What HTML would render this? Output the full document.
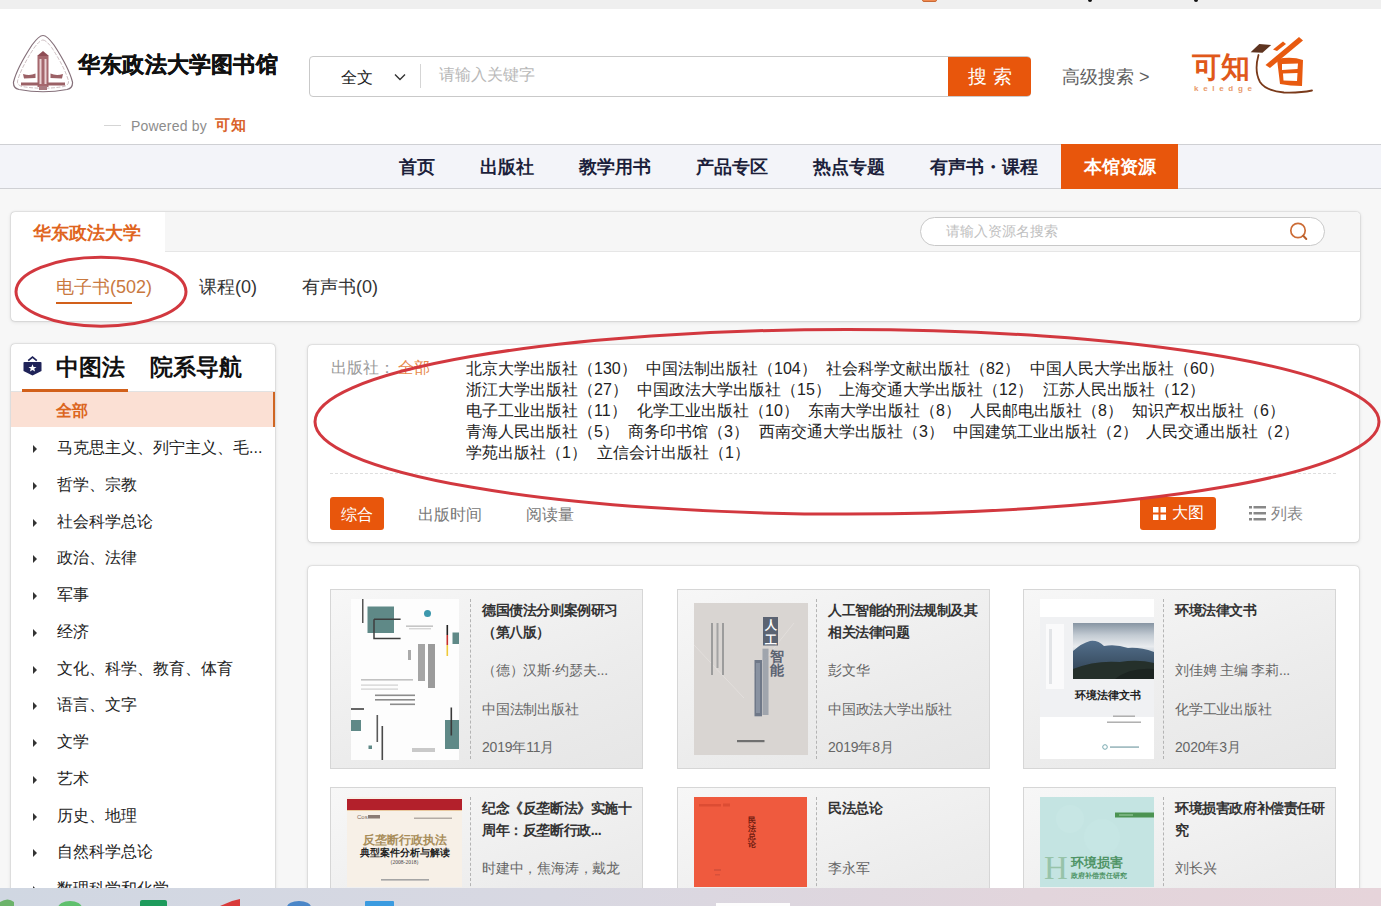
<!DOCTYPE html>
<html><head><meta charset="utf-8">
<style>
*{margin:0;padding:0;box-sizing:border-box}
html,body{width:1381px;height:906px;overflow:hidden;background:#f7f7f7;font-family:"Liberation Sans",sans-serif;color:#333}
.abs{position:absolute}
#topstrip{left:0;top:0;width:1381px;height:9px;background:#efefef}
#header{left:0;top:9px;width:1381px;height:135px;background:#fff}
#nav{left:0;top:144px;width:1381px;height:45px;background:#f3f4f9;border-top:1px solid #cfd0d4;border-bottom:1px solid #cfd0d4}
.navi{position:absolute;top:12px;font-size:18px;font-weight:bold;color:#1c1f3b;line-height:20px;white-space:nowrap}
.panel{position:absolute;background:#fff;border-radius:4px;box-shadow:0 0 1.5px rgba(0,0,0,.35),0 1px 4px rgba(0,0,0,.1)}
.t{position:absolute;white-space:nowrap;line-height:1}
.pub{font-size:16px;color:#222}
.card{position:absolute;width:313px;height:180px;border:1px solid #d6d6d6;background:linear-gradient(160deg,#f7f7f7 0%,#ececec 60%,#e6e6e6 100%)}
.ttl{font-size:14px;letter-spacing:-0.4px;font-weight:bold;color:#333}
.inf{font-size:14px;letter-spacing:-0.2px;color:#666}
.tri{position:absolute;left:22px;width:0;height:0;border-top:4px solid transparent;border-bottom:4px solid transparent;border-left:4px solid #333}
</style></head><body>
<div id="topstrip" class="abs"></div>
<div class="abs" style="left:922px;top:-4px;width:15px;height:6px;border-radius:2px;background:#f08a50;border:1px solid #c96a36"></div>
<div class="abs" style="left:1088px;top:-2px;width:4px;height:4px;border-radius:2px;background:#111"></div>
<div class="abs" style="left:1194px;top:-2px;width:4px;height:4px;border-radius:2px;background:#111"></div>
<div id="header" class="abs"></div>
<!-- emblem -->
<svg class="abs" style="left:10px;top:32px" width="66" height="62" viewBox="0 0 66 62">
  <path d="M33 3.5 Q37 3.5 44 13 Q59 36 62.5 50 Q63 56 57 57.5 Q33 62 9 57.5 Q3 56 3.5 50 Q7 36 22 13 Q29 3.5 33 3.5Z" fill="#fff" stroke="#85707a" stroke-width="1.2"/>
  <path d="M33 8 Q36 8 42 16 Q55 36 58.5 49 Q59 53 54 54.5 Q33 58 12 54.5 Q7 53 7.5 49 Q11 36 24 16 Q30 8 33 8Z" fill="none" stroke="#b8a4a8" stroke-width="0.7" stroke-dasharray="4 1.5"/>
  <path d="M33 19 L39 24 L27 24Z" fill="#8f4d55"/>
  <rect x="27.5" y="24" width="11" height="31" fill="#a5676d"/>
  <rect x="29.5" y="27" width="2" height="25" fill="#e9d2d4"/>
  <rect x="34.5" y="27" width="2" height="25" fill="#e9d2d4"/>
  <path d="M13 42 Q20 44 25.5 41.5 L25.5 46 L14 46.5Z M40.5 41.5 Q46 44 53 42 L52 46.5 L40.5 46Z" fill="#9b6166"/>
  <rect x="11" y="50.5" width="18" height="3" fill="#9b6166"/><rect x="37" y="50.5" width="18" height="3" fill="#9b6166"/>
  <rect x="29" y="54" width="8" height="4" fill="#a97a80"/>
</svg>
<div class="t" style="left:78px;top:54px;font-size:22px;font-weight:bold;color:#111;letter-spacing:0.2px;-webkit-text-stroke:0.35px #111">华东政法大学图书馆</div>
<div class="abs" style="left:104px;top:125px;width:17px;height:1px;background:#d5d5d5"></div>
<div class="t" style="left:131px;top:119px;font-size:14px;color:#8c8c8c;letter-spacing:0.2px">Powered by</div>
<div class="t" style="left:215px;top:117px;font-size:15px;font-weight:bold;color:#d9622a;letter-spacing:1px">可知</div>
<!-- search -->
<div class="abs" style="left:309px;top:56px;width:722px;height:41px;border:1px solid #c9c9c9;border-radius:4px;background:#fff"></div>
<div class="t" style="left:341px;top:69.5px;font-size:16px;color:#222">全文</div>
<svg class="abs" style="left:393px;top:72px" width="14" height="10" viewBox="0 0 14 10"><path d="M2 2.5 L7 7.5 L12 2.5" fill="none" stroke="#333" stroke-width="1.4"/></svg>
<div class="abs" style="left:420px;top:64px;width:1px;height:24px;background:#d5d5d5"></div>
<div class="t" style="left:439px;top:67px;font-size:16px;color:#b8b8b8">请输入关键字</div>
<div class="abs" style="left:948px;top:57px;width:83px;height:39px;background:#e8560c;border-radius:0 4px 4px 0"></div>
<div class="t" style="left:968px;top:66.5px;font-size:19px;color:#fff;letter-spacing:6px">搜索</div>
<div class="t" style="left:1062px;top:68px;font-size:18px;color:#5e5e5e">高级搜索 &gt;</div>
<!-- keledge logo -->
<div class="t" style="left:1192px;top:53px;font-size:29px;font-weight:bold;color:#e0581a;letter-spacing:0px">可知</div>
<div class="t" style="left:1194px;top:85px;font-size:8px;color:#e8996a;letter-spacing:4.7px;font-weight:bold">keledge</div>
<svg class="abs" style="left:1248px;top:35px" width="66" height="62" viewBox="0 0 66 62">
  <path d="M2.6 17.2 L11.3 9 L23.2 10.1 L14.5 17.7Z" fill="#5e3420"/>
  <path d="M10.5 20 Q6 36 12 47 Q18 56 36 57.5 Q52 58 64 55.5" fill="none" stroke="#7a3a1a" stroke-width="1.8" stroke-linecap="round"/>
  <path d="M25 14.5 L35 6.5 L38 9 L29 16Z" fill="#e85a10"/>
  <path d="M51 2 L55 5.5 L22 33 L17.5 30Z" fill="#e85a10"/>
  <path d="M29 24 Q44 21 55 25 L54 51 Q42 51 32 49Z M34 29 L50 28.5 L49.5 34 L34 35Z M35 38.5 L49.5 38 L49 46 L35.5 45.5Z" fill="#e85a10" fill-rule="evenodd"/>
</svg>
<div id="nav" class="abs">
  <div class="navi" style="left:399px">首页</div>
  <div class="navi" style="left:480px">出版社</div>
  <div class="navi" style="left:579px">教学用书</div>
  <div class="navi" style="left:696px">产品专区</div>
  <div class="navi" style="left:813px">热点专题</div>
  <div class="navi" style="left:930px">有声书・课程</div>
  <div style="position:absolute;left:1061px;top:-1px;width:117px;height:45px;background:#e8560c"></div>
  <div class="navi" style="left:1084px;color:#fff">本馆资源</div>
</div>

<!-- panel 1 -->
<div class="panel" style="left:11px;top:212px;width:1349px;height:109px;overflow:hidden">
  <div class="abs" style="left:154px;top:0;width:1196px;height:40px;background:#f6f6f6;border-bottom:1px solid #e6e6e6"></div>
  <div class="t" style="left:22px;top:12px;font-size:18px;font-weight:bold;color:#e0651e">华东政法大学</div>
  <div class="abs" style="left:909px;top:5px;width:405px;height:29px;border:1px solid #c8c8c8;border-radius:15px;background:#fff"></div>
  <div class="t" style="left:935px;top:12.5px;font-size:13.5px;color:#c0c0c0">请输入资源名搜索</div>
  <svg class="abs" style="left:1277px;top:9px" width="22" height="22" viewBox="0 0 22 22"><circle cx="10" cy="9.5" r="7.2" fill="none" stroke="#cc6c36" stroke-width="1.7"/><path d="M15.2 14.8 L18.3 18" stroke="#b8602e" stroke-width="2" stroke-linecap="round"/></svg>
  <div class="t" style="left:45px;top:66px;font-size:18px;color:#c9793f">电子书(502)</div>
  <div class="abs" style="left:45px;top:90px;width:76px;height:2px;background:#d2601a"></div>
  <div class="t" style="left:188px;top:66px;font-size:18px;color:#333">课程(0)</div>
  <div class="t" style="left:291px;top:66px;font-size:18px;color:#333">有声书(0)</div>
</div>

<!-- sidebar -->
<div class="panel" style="left:11px;top:344px;width:264px;height:600px;overflow:hidden">
  <svg class="abs" style="left:12px;top:12px" width="20" height="20" viewBox="0 0 20 20"><path d="M5.2 4.6 L9.5 1.2 L13.8 4.6" fill="none" stroke="#1f2358" stroke-width="1.7"/><path d="M0.5 6.8 Q0.5 6 1.5 6 L17.5 6 Q18.5 6 18.5 6.8 L18.5 15 L9.5 19.5 L0.5 15Z" fill="#1f2358"/><path d="M9.5 8.2 L10.6 11 L13.5 11 L11.2 12.8 L12.1 15.6 L9.5 13.9 L6.9 15.6 L7.8 12.8 L5.5 11 L8.4 11Z" fill="#fff"/></svg>
  <div class="t" style="left:45px;top:12px;font-size:23px;font-weight:bold;color:#111">中图法</div>
  <div class="t" style="left:139px;top:12px;font-size:23px;font-weight:bold;color:#111">院系导航</div>
  <div class="abs" style="left:0;top:47px;width:264px;height:1px;background:#e2e2e2"></div>
  <div class="abs" style="left:11px;top:45px;width:106px;height:3px;background:#d2601a"></div>
  <div class="abs" style="left:0;top:48px;width:264px;height:35px;background:#fbe0d4;border-right:2px solid #cf6522"></div>
  <div class="t" style="left:45px;top:59px;font-size:16px;font-weight:bold;color:#dc661e">全部</div>
  <div class="tri" style="top:101.0px"></div>
  <div class="t" style="left:46px;top:96.0px;font-size:16px;color:#222">马克思主义、列宁主义、毛...</div>
  <div class="tri" style="top:137.8px"></div>
  <div class="t" style="left:46px;top:132.8px;font-size:16px;color:#222">哲学、宗教</div>
  <div class="tri" style="top:174.5px"></div>
  <div class="t" style="left:46px;top:169.5px;font-size:16px;color:#222">社会科学总论</div>
  <div class="tri" style="top:211.2px"></div>
  <div class="t" style="left:46px;top:206.2px;font-size:16px;color:#222">政治、法律</div>
  <div class="tri" style="top:248.0px"></div>
  <div class="t" style="left:46px;top:243.0px;font-size:16px;color:#222">军事</div>
  <div class="tri" style="top:284.8px"></div>
  <div class="t" style="left:46px;top:279.8px;font-size:16px;color:#222">经济</div>
  <div class="tri" style="top:321.5px"></div>
  <div class="t" style="left:46px;top:316.5px;font-size:16px;color:#222">文化、科学、教育、体育</div>
  <div class="tri" style="top:358.2px"></div>
  <div class="t" style="left:46px;top:353.2px;font-size:16px;color:#222">语言、文字</div>
  <div class="tri" style="top:395.0px"></div>
  <div class="t" style="left:46px;top:390.0px;font-size:16px;color:#222">文学</div>
  <div class="tri" style="top:431.8px"></div>
  <div class="t" style="left:46px;top:426.8px;font-size:16px;color:#222">艺术</div>
  <div class="tri" style="top:468.5px"></div>
  <div class="t" style="left:46px;top:463.5px;font-size:16px;color:#222">历史、地理</div>
  <div class="tri" style="top:505.2px"></div>
  <div class="t" style="left:46px;top:500.2px;font-size:16px;color:#222">自然科学总论</div>
  <div class="tri" style="top:542.0px"></div>
  <div class="t" style="left:46px;top:537.0px;font-size:16px;color:#222">数理科学和化学</div>
</div>

<!-- publisher filter -->
<div class="panel" style="left:308px;top:345px;width:1051px;height:197px">
  <div class="t" style="left:23px;top:15px;font-size:16px;color:#999">出版社：</div>
  <div class="t" style="left:90px;top:15px;font-size:16px;color:#e8894a">全部</div>
  <div class="t pub" style="left:158px;top:16px">北京大学出版社（130）</div>
  <div class="t pub" style="left:338px;top:16px">中国法制出版社（104）</div>
  <div class="t pub" style="left:518px;top:16px">社会科学文献出版社（82）</div>
  <div class="t pub" style="left:722px;top:16px">中国人民大学出版社（60）</div>
  <div class="t pub" style="left:158px;top:37px">浙江大学出版社（27）</div>
  <div class="t pub" style="left:329px;top:37px">中国政法大学出版社（15）</div>
  <div class="t pub" style="left:531px;top:37px">上海交通大学出版社（12）</div>
  <div class="t pub" style="left:735px;top:37px">江苏人民出版社（12）</div>
  <div class="t pub" style="left:158px;top:58px">电子工业出版社（11）</div>
  <div class="t pub" style="left:329px;top:58px">化学工业出版社（10）</div>
  <div class="t pub" style="left:500px;top:58px">东南大学出版社（8）</div>
  <div class="t pub" style="left:662px;top:58px">人民邮电出版社（8）</div>
  <div class="t pub" style="left:824px;top:58px">知识产权出版社（6）</div>
  <div class="t pub" style="left:158px;top:79px">青海人民出版社（5）</div>
  <div class="t pub" style="left:320px;top:79px">商务印书馆（3）</div>
  <div class="t pub" style="left:451px;top:79px">西南交通大学出版社（3）</div>
  <div class="t pub" style="left:645px;top:79px">中国建筑工业出版社（2）</div>
  <div class="t pub" style="left:838px;top:79px">人民交通出版社（2）</div>
  <div class="t pub" style="left:158px;top:100px">学苑出版社（1）</div>
  <div class="t pub" style="left:289px;top:100px">立信会计出版社（1）</div>
  <div class="abs" style="left:22px;top:128px;width:1006px;height:0;border-top:1px dashed #dedede"></div>
  <div class="abs" style="left:22px;top:152px;width:54px;height:33px;background:#e8560c;border-radius:3px"></div>
  <div class="t" style="left:33px;top:162px;font-size:16px;color:#fff">综合</div>
  <div class="t" style="left:110px;top:162px;font-size:16px;color:#777">出版时间</div>
  <div class="t" style="left:218px;top:162px;font-size:16px;color:#777">阅读量</div>
  <div class="abs" style="left:832px;top:152px;width:76px;height:33px;background:#e8560c;border-radius:3px"></div>
  <svg class="abs" style="left:845px;top:162px" width="13" height="13" viewBox="0 0 13 13"><rect x="0" y="0" width="5.5" height="5.5" fill="#fff"/><rect x="7.5" y="0" width="5.5" height="5.5" fill="#fff"/><rect x="0" y="7.5" width="5.5" height="5.5" fill="#fff"/><rect x="7.5" y="7.5" width="5.5" height="5.5" fill="#fff"/></svg>
  <div class="t" style="left:864px;top:160px;font-size:16px;color:#fff">大图</div>
  <svg class="abs" style="left:941px;top:161px" width="17" height="15" viewBox="0 0 17 15"><rect x="0" y="0" width="3" height="2.5" fill="#888"/><rect x="4.5" y="0" width="12.5" height="2.5" fill="#888"/><rect x="0" y="6" width="3" height="2.5" fill="#888"/><rect x="4.5" y="6" width="12.5" height="2.5" fill="#888"/><rect x="0" y="12" width="3" height="2.5" fill="#888"/><rect x="4.5" y="12" width="12.5" height="2.5" fill="#888"/></svg>
  <div class="t" style="left:963px;top:160.5px;font-size:16px;color:#858585">列表</div>
</div>

<!-- books panel -->
<div class="panel" style="left:308px;top:566px;width:1051px;height:400px;overflow:hidden">
  <div class="card" style="left:22px;top:23px"></div>
  <div class="abs" style="left:43px;top:33px;line-height:0"><svg width="108" height="161" viewBox="0 0 108 161"><rect width="108" height="161" fill="#fdfdfd"/><rect x="11" y="0" width="1.5" height="24" fill="#555"/><rect x="16.5" y="7.5" width="26.5" height="26.5" fill="#5f8987"/><path d="M23 20.3 H49.6 M23 20.3 V39.5 H49.6" fill="none" stroke="#3e3e3e" stroke-width="1.5"/><circle cx="76.5" cy="14.5" r="3.5" fill="#3d98ad"/><rect x="55" y="26.5" width="27" height="1.3" fill="#b9b9b9"/><rect x="58" y="29.3" width="22" height="1" fill="#c5c5c5"/><rect x="95.5" y="26" width="1.6" height="10" fill="#222"/><rect x="95.5" y="36" width="1.6" height="10" fill="#c8302e"/><rect x="95.5" y="46" width="1.6" height="11" fill="#efc93a"/><rect x="101.5" y="33.5" width="6.5" height="11.5" fill="#5f8987"/><rect x="77" y="45" width="7" height="44" fill="#8a8a8a" opacity="0.85"/><rect x="67" y="45" width="7" height="37" fill="#8f8f8f" opacity="0.8"/><rect x="57" y="51" width="3" height="10" fill="#aaa"/><rect x="10" y="80" width="52" height="1.6" fill="#c2c2c2"/><rect x="10" y="85.5" width="37" height="1.2" fill="#cfcfcf"/><rect x="10" y="89.5" width="37" height="1.2" fill="#cfcfcf"/><rect x="24" y="95.5" width="40" height="1.6" fill="#8c8c8c"/><rect x="24" y="100" width="40" height="1.6" fill="#8c8c8c"/><rect x="39" y="104.5" width="25" height="1.6" fill="#8c8c8c"/><rect x="0" y="109" width="13" height="2" fill="#666"/><rect x="0" y="121" width="10" height="11" fill="#5f8987"/><rect x="25.5" y="116" width="1.6" height="27" fill="#5a5a5a"/><rect x="30.5" y="127" width="1.6" height="34" fill="#4a4a4a"/><rect x="17.5" y="146.5" width="3.5" height="3.5" fill="#5f8987"/><rect x="94" y="121" width="14" height="29" fill="#5f8987"/><rect x="99.5" y="108.5" width="1.6" height="28" fill="#3a3a3a"/><rect x="61" y="149" width="23" height="4" fill="#c9c9c9"/></svg></div>
  <div class="abs" style="left:162px;top:33px;width:0;height:160px;border-left:1px dashed #b4b4b4"></div>
  <div class="t ttl" style="left:174px;top:37px">德国债法分则案例研习</div>
  <div class="t ttl" style="left:174px;top:59px">（第八版）</div>
  <div class="t inf" style="left:174px;top:97px">（德）汉斯·约瑟夫...</div>
  <div class="t inf" style="left:174px;top:136px">中国法制出版社</div>
  <div class="t inf" style="left:174px;top:174px">2019年11月</div>
  <div class="card" style="left:369px;top:23px"></div>
  <div class="abs" style="left:386px;top:37px;line-height:0"><svg width="114" height="152" viewBox="0 0 114 152"><rect width="114" height="152" fill="#d9d5d2"/><path d="M0 42 L50 95 M60 70 L100 20" fill="none" stroke="#e4e1de" stroke-width="0.8"/><rect x="69" y="14" width="15" height="28.5" fill="#5b6372"/><text x="76.5" y="26" font-size="12" fill="#fff" text-anchor="middle" font-weight="bold">人</text><text x="76.5" y="40.5" font-size="12" fill="#fff" text-anchor="middle" font-weight="bold">工</text><text x="82.5" y="57.5" font-size="13.5" fill="#5b6372" text-anchor="middle" font-weight="bold">智</text><text x="82.5" y="72" font-size="13.5" fill="#5b6372" text-anchor="middle" font-weight="bold">能</text><rect x="60.5" y="57" width="7.5" height="56.3" fill="#6f7888"/><rect x="62" y="60" width="4" height="50" fill="#8992a1"/><rect x="68.5" y="45.7" width="6" height="66.3" fill="#8c94a0" opacity="0.75"/><rect x="17" y="20" width="2" height="52" fill="#9c9c9c"/><rect x="22.5" y="20" width="2" height="45" fill="#a3a3a3"/><rect x="28" y="20" width="2" height="52" fill="#9c9c9c"/><rect x="43" y="137" width="27.5" height="2.2" fill="#707070"/></svg></div>
  <div class="abs" style="left:508px;top:33px;width:0;height:160px;border-left:1px dashed #b4b4b4"></div>
  <div class="t ttl" style="left:520px;top:37px">人工智能的刑法规制及其</div>
  <div class="t ttl" style="left:520px;top:59px">相关法律问题</div>
  <div class="t inf" style="left:520px;top:97px">彭文华</div>
  <div class="t inf" style="left:520px;top:136px">中国政法大学出版社</div>
  <div class="t inf" style="left:520px;top:174px">2019年8月</div>
  <div class="card" style="left:715px;top:23px"></div>
  <div class="abs" style="left:732px;top:33px;line-height:0"><svg width="114" height="160" viewBox="0 0 114 160"><defs><linearGradient id="sky" x1="0" y1="0" x2="0" y2="1"><stop offset="0" stop-color="#8795a3"/><stop offset="0.22" stop-color="#c3cbd3"/><stop offset="0.42" stop-color="#e8ebee"/><stop offset="0.6" stop-color="#b5c2cf"/><stop offset="1" stop-color="#8fa2b5"/></linearGradient><linearGradient id="mt" x1="0" y1="0" x2="0" y2="1"><stop offset="0" stop-color="#536f8c"/><stop offset="1" stop-color="#2c3d4c"/></linearGradient></defs><rect width="114" height="160" fill="#fff"/><rect x="0" y="18" width="114" height="100" fill="#f0f1f3"/><rect x="6" y="25" width="18" height="65" fill="#fafafb"/><rect x="9" y="30" width="3" height="55" fill="#e2e4e7"/><rect x="33" y="24" width="81" height="56" fill="url(#sky)"/><path d="M33 52 Q42 44 50 42 Q58 41 64 47 Q76 45 88 49 Q100 48 114 53 L114 80 L33 80Z" fill="url(#mt)"/><path d="M33 70 Q55 61 80 63 Q98 60 114 64 L114 80 L33 80Z" fill="#25302b"/><path d="M75 80 Q90 68 114 70 L114 80Z" fill="#1c2421"/><text x="67.5" y="100" font-size="11" font-family="Liberation Serif, serif" font-weight="bold" fill="#222" text-anchor="middle" letter-spacing="0">环境法律文书</text><rect x="73" y="116.5" width="22" height="1.4" fill="#a9a9a9"/><rect x="67" y="122.5" width="34" height="1.4" fill="#a9a9a9"/><circle cx="65" cy="148" r="2.3" fill="none" stroke="#6aa0a8" stroke-width="0.9"/><rect x="70" y="147.3" width="29" height="1.6" fill="#9bb7bd"/></svg></div>
  <div class="abs" style="left:855px;top:33px;width:0;height:160px;border-left:1px dashed #b4b4b4"></div>
  <div class="t ttl" style="left:867px;top:37px">环境法律文书</div>
  <div class="t inf" style="left:867px;top:97px">刘佳娉 主编 李莉...</div>
  <div class="t inf" style="left:867px;top:136px">化学工业出版社</div>
  <div class="t inf" style="left:867px;top:174px">2020年3月</div>
  <div class="card" style="left:22px;top:221px"></div>
  <div class="abs" style="left:39px;top:231px;line-height:0"><svg width="115" height="90" viewBox="0 0 115 90"><rect width="115" height="90" fill="#f7f0e7"/><rect x="0" y="2" width="115" height="11" fill="#b3202b"/><rect x="0" y="13" width="115" height="1" fill="#e9c9a0"/><text x="10" y="22" font-size="6" font-family="Liberation Sans" fill="#7d6a60">Cos</text><rect x="21" y="18" width="12" height="3.5" fill="#8a7b74"/><rect x="67" y="20.5" width="38" height="1.5" fill="#b4aca6"/><text x="57.5" y="46.5" font-size="12" font-family="Liberation Serif, serif" font-weight="bold" fill="#a88d5a" text-anchor="middle">反垄断行政执法</text><text x="57.5" y="59" font-size="9.6" font-family="Liberation Serif, serif" font-weight="bold" fill="#222" text-anchor="middle">典型案件分析与解读</text><text x="57.5" y="67" font-size="5.5" font-family="Liberation Serif, serif" fill="#444" text-anchor="middle">（2008-2018）</text><rect x="34" y="82" width="48" height="1.6" fill="#a5a5a5"/></svg></div>
  <div class="abs" style="left:162px;top:231px;width:0;height:160px;border-left:1px dashed #b4b4b4"></div>
  <div class="t ttl" style="left:174px;top:235px">纪念《反垄断法》实施十</div>
  <div class="t ttl" style="left:174px;top:257px">周年：反垄断行政...</div>
  <div class="t inf" style="left:174px;top:295px">时建中，焦海涛，戴龙</div>
  <div class="card" style="left:369px;top:221px"></div>
  <div class="abs" style="left:386px;top:231px;line-height:0"><svg width="113" height="90" viewBox="0 0 113 90"><rect width="113" height="90" fill="#ef5a3e"/><rect x="5" y="7" width="22" height="2.5" fill="#dc4c33"/><rect x="29" y="6.5" width="7" height="3" fill="#dc4c33"/><text x="58" y="26" font-size="8" font-weight="bold" fill="#6e1a10" text-anchor="middle">民</text><text x="58" y="34" font-size="8" font-weight="bold" fill="#6e1a10" text-anchor="middle">法</text><text x="58" y="42" font-size="8" font-weight="bold" fill="#6e1a10" text-anchor="middle">总</text><text x="58" y="50" font-size="8" font-weight="bold" fill="#6e1a10" text-anchor="middle">论</text><rect x="20" y="72" width="7" height="2" fill="#d8503a"/><rect x="21" y="77" width="5" height="1.5" fill="#d8503a"/></svg></div>
  <div class="abs" style="left:508px;top:231px;width:0;height:160px;border-left:1px dashed #b4b4b4"></div>
  <div class="t ttl" style="left:520px;top:235px">民法总论</div>
  <div class="t inf" style="left:520px;top:295px">李永军</div>
  <div class="card" style="left:715px;top:221px"></div>
  <div class="abs" style="left:732px;top:231px;line-height:0"><svg width="114" height="90" viewBox="0 0 114 90"><rect width="114" height="90" fill="#c4e4e2"/><circle cx="30" cy="22" r="14" fill="#c7e6e4"/><circle cx="62" cy="40" r="18" fill="#c6e6e4"/><rect x="75" y="15.5" width="39" height="5" fill="#4c9352"/><rect x="79" y="17.5" width="14" height="1" fill="#9fd0a5"/><text x="4" y="82" font-size="33" font-family="Liberation Serif, serif" fill="#97c3a9">H</text><text x="31" y="70" font-size="12.5" font-family="Liberation Serif, serif" font-weight="bold" fill="#4f9466">环境损害</text><text x="31" y="81" font-size="7" font-family="Liberation Serif, serif" font-weight="bold" fill="#4f9466">政府补偿责任研究</text></svg></div>
  <div class="abs" style="left:855px;top:231px;width:0;height:160px;border-left:1px dashed #b4b4b4"></div>
  <div class="t ttl" style="left:867px;top:235px">环境损害政府补偿责任研</div>
  <div class="t ttl" style="left:867px;top:257px">究</div>
  <div class="t inf" style="left:867px;top:295px">刘长兴</div>
</div>

<!-- taskbar -->
<div class="abs" style="left:0;top:888px;width:1381px;height:18px;background:linear-gradient(90deg,#d0d7e2 0%,#d8d8e2 40%,#e2d5dc 75%,#e6d4da 100%)"></div>
<svg class="abs" style="left:0;top:888px" width="1381" height="18" viewBox="0 0 1381 18">
  <path d="M0 14 Q8 9 14 14 L14 18 L0 18Z" fill="#6cb36a"/>
  <ellipse cx="70" cy="20" rx="12" ry="7" fill="#5fc06d"/>
  <rect x="140" y="12" width="27" height="8" rx="2" fill="#1e9b5c"/>
  <path d="M220 18 L232 13 L240 11 L240 18Z" fill="#d93a3a"/>
  <ellipse cx="299" cy="19" rx="12" ry="6" fill="#4a86c8"/>
  <rect x="365" y="13" width="29" height="6" rx="1" fill="#3b9be0"/>
  <rect x="716" y="15" width="74" height="4" fill="#fdfdfd"/>
</svg>
<svg class="abs" style="left:0;top:0;pointer-events:none" width="1381" height="906" viewBox="0 0 1381 906">
  <ellipse cx="101" cy="291.7" rx="85" ry="34.5" fill="none" stroke="#d2383f" stroke-width="3"/>
  <ellipse cx="847" cy="421.8" rx="532" ry="92.3" fill="none" stroke="#d2383f" stroke-width="3"/>
</svg>
<script>
(function(){
  try{
    var b=document.body,p=document.createElement('span');
    p.style.cssText='position:absolute;left:-9999px;top:0;font-size:100px;font-family:"Liberation Sans",sans-serif;white-space:nowrap;letter-spacing:0';
    p.textContent='\u4e2d\u56fd\u56fe\u4e66\u9986';
    b.appendChild(p);
    var w=p.getBoundingClientRect().width;b.removeChild(p);
    if(!(w>0)||w>=470)return;
    var ls=(1-w/500).toFixed(3)+'em';
    var re=/[\u3000-\u30ff\u3400-\u9fff\uff00-\uffef\u00b7\u2014\u300a\u300b]+/g;
    var walker=document.createTreeWalker(b,NodeFilter.SHOW_TEXT,null,false),nodes=[],n;
    while((n=walker.nextNode())){var pe=n.parentNode;if(!pe||pe.nodeName==='SCRIPT'||pe.nodeName==='STYLE')continue;if(pe.namespaceURI&&pe.namespaceURI.indexOf('svg')>=0)continue;if(re.test(n.nodeValue))nodes.push(n);re.lastIndex=0;}
    nodes.forEach(function(t){
      var v=t.nodeValue,f=document.createDocumentFragment(),last=0,m;re.lastIndex=0;
      while((m=re.exec(v))){
        if(m.index>last)f.appendChild(document.createTextNode(v.slice(last,m.index)));
        var fw=parseInt(getComputedStyle(t.parentNode).fontWeight)||400;var sp=document.createElement('span');sp.style.cssText='display:inline-block;vertical-align:baseline;margin-bottom:-0.08em;background:currentColor;opacity:'+(fw>=600?0.55:0.3)+';height:0.82em;width:'+(m[0].length*0.96)+'em;margin-right:'+(m[0].length*0.04)+'em';f.appendChild(sp);last=m.index+m[0].length;
      }
      if(last<v.length)f.appendChild(document.createTextNode(v.slice(last)));
      t.parentNode.replaceChild(f,t);
    });
  }catch(e){}
})();
</script>
</body></html>
